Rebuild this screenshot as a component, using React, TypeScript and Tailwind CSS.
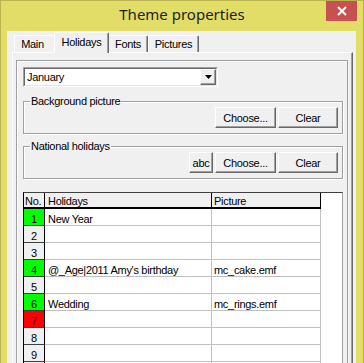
import React from "react";

const font = { fontFamily: '"Liberation Sans", Arial, sans-serif' };

function Btn({ w, children }: { w: string; children: React.ReactNode }) {
  return (
    <div
      className={`${w} h-[21px] flex items-center justify-center border border-t-white border-l-white border-r-[#696969] border-b-[#696969] shadow-[inset_-1px_-1px_0_#a0a0a0] bg-[#f0f0f0] text-[11px] tracking-[-0.3px] text-black leading-[14px]`}
    >
      {children}
    </div>
  );
}

type Row = { n: number; c?: string; h?: string; p?: string };
const rows: Row[] = [
  { n: 1, c: "bg-[#00ff00]", h: "New Year" },
  { n: 2 },
  { n: 3 },
  { n: 4, c: "bg-[#00ff00]", h: "@_Age|2011 Amy's birthday", p: "mc_cake.emf" },
  { n: 5 },
  { n: 6, c: "bg-[#00ff00]", h: "Wedding", p: "mc_rings.emf" },
  { n: 7, c: "bg-[#ff0000]" },
  { n: 8 },
  { n: 9 },
  { n: 10 },
];

export default function App() {
  return (
    <div
      className="w-[364px] h-[363px] bg-[#e1dd67] border-x border-t border-[#b8b450] flex flex-col overflow-hidden relative"
      style={font}
    >
      {/* Title bar */}
      <div className="h-[30px] shrink-0 flex justify-center">
        <span
          className="text-[15px] leading-[26px] text-[#1e1e1e]"
          style={{ fontFamily: '"Noto Sans", "Open Sans", sans-serif' }}
        >
          Theme properties
        </span>
      </div>
      <div className="absolute top-[-1px] right-[6px] w-[31px] h-[21px] bg-[#c75050] flex items-center justify-center">
        <svg width="10" height="10" viewBox="0 0 10 10">
          <path d="M1 1 L9 9 M9 1 L1 9" stroke="white" strokeWidth="2" />
        </svg>
      </div>

      {/* Client area */}
      <div className="ml-[6px] w-[349px] flex-1 bg-[#f0f0f0] flex flex-col overflow-hidden">
        {/* Tabs */}
        <div className="h-[21px] shrink-0 pl-[7px] flex items-end text-[11px] tracking-[-0.3px] text-black">
          <div className="w-[40px] h-[17px] border-l border-t border-white rounded-tl-[2px] flex justify-center pr-[4px] leading-[17px]">
            Main
          </div>
          <div className="w-[55px] h-[21px] mb-[-1px] relative z-10 bg-[#f0f0f0] border-l border-t border-white border-r border-r-[#696969] shadow-[inset_-1px_0_0_#a0a0a0] rounded-t-[2px] flex justify-center leading-[16px] pt-[1px]">
            Holidays
          </div>
          <div className="w-[39px] h-[17px] border-t border-white border-r border-r-[#696969] shadow-[inset_-1px_0_0_#a0a0a0] rounded-tr-[2px] flex justify-center leading-[17px]">
            Fonts
          </div>
          <div className="w-[51px] h-[17px] border-l border-t border-white border-r border-r-[#696969] shadow-[inset_-1px_0_0_#a0a0a0] rounded-t-[2px] flex justify-center leading-[17px]">
            Pictures
          </div>
        </div>

        {/* Panel */}
        <div className="ml-[5px] w-[341px] flex-1 border-l border-t border-white border-r border-r-[#696969] shadow-[inset_-1px_0_0_#a0a0a0] pl-[3px] pt-[7px] flex flex-col">
          <div className="w-[332px] flex-1 border-l border-t border-r border-[#a0a0a0] shadow-[inset_1px_1px_0_#ffffff] pl-[6px] pt-[6px] flex flex-col">
            {/* Combo */}
            <div className="w-[195px] h-[20px] border border-t-[#a0a0a0] border-l-[#a0a0a0] border-r-white border-b-white bg-white flex">
              <div className="flex-1 flex border border-t-[#696969] border-l-[#696969] border-r-[#e3e3e3] border-b-[#e3e3e3]">
                <span className="flex-1 pl-[2px] text-[11px] tracking-[-0.3px] leading-[17px] text-black">
                  January
                </span>
                <div className="w-[16px] h-[16px] bg-[#f0f0f0] border border-t-white border-l-white border-r-[#696969] border-b-[#696969] shadow-[inset_-1px_-1px_0_#a0a0a0] flex items-center justify-center">
                  <svg width="7" height="4" viewBox="0 0 7 4">
                    <path d="M0 0 H7 L3.5 4 Z" fill="black" />
                  </svg>
                </div>
              </div>
            </div>

            {/* Background picture group */}
            <div className="relative mt-[14px] w-[320px] h-[33px] border border-[#a0a0a0] shadow-[inset_1px_1px_0_#ffffff,1px_1px_0_#ffffff] flex justify-end items-start pt-[5px] pr-[4px] gap-[2px]">
              <span className="absolute left-[6px] top-[-7px] px-[1px] bg-[#f0f0f0] text-[11px] tracking-[-0.3px] leading-[13px] text-black">
                Background picture
              </span>
              <Btn w="w-[61px]">Choose...</Btn>
              <Btn w="w-[60px]">Clear</Btn>
            </div>

            {/* National holidays group */}
            <div className="relative mt-[12px] w-[320px] h-[33px] border border-[#a0a0a0] shadow-[inset_1px_1px_0_#ffffff,1px_1px_0_#ffffff] flex justify-end items-start pt-[5px] pr-[4px] gap-[2px]">
              <span className="absolute left-[6px] top-[-7px] px-[1px] bg-[#f0f0f0] text-[11px] tracking-[-0.3px] leading-[13px] text-black">
                National holidays
              </span>
              <Btn w="w-[24px]">abc</Btn>
              <Btn w="w-[61px]">Choose...</Btn>
              <Btn w="w-[60px]">Clear</Btn>
            </div>

            {/* Grid */}
            <div className="mt-[13px] w-[320px] flex-1 bg-white border-l border-t border-r border-l-black border-t-[#404040] border-r-[#a0a0a0] flex flex-col overflow-hidden text-[11px] tracking-[-0.3px] text-black">
              <div className="flex h-[16px] shrink-0">
                <div className="w-[21px] bg-[#f0f0f0] border-r border-b-2 border-black pl-[1px] leading-[16px]">No.</div>
                <div className="w-[167px] bg-[#f0f0f0] border-r border-b-2 border-black pl-[3px] leading-[16px]">Holidays</div>
                <div className="w-[109px] bg-[#f0f0f0] border-r border-b-2 border-black pl-[2px] leading-[16px]">Picture</div>
                <div className="flex-1" />
              </div>
              {rows.map((r) => (
                <div key={r.n} className="flex h-[17px] shrink-0">
                  <div
                    className={`w-[21px] ${r.c ?? "bg-[#f0f0f0]"} border-r border-b border-r-black border-b-[#404040] text-center leading-[20px] overflow-hidden`}
                  >
                    {r.n}
                  </div>
                  <div className="w-[167px] border-r border-b border-[#c0c0c0] pl-[3px] leading-[21px] overflow-hidden whitespace-nowrap">
                    {r.h ?? ""}
                  </div>
                  <div className="w-[109px] border-r border-b border-[#c0c0c0] pl-[2px] leading-[21px] overflow-hidden whitespace-nowrap">
                    {r.p ?? ""}
                  </div>
                  <div className="flex-1" />
                </div>
              ))}
            </div>
          </div>
        </div>
      </div>
    </div>
  );
}
